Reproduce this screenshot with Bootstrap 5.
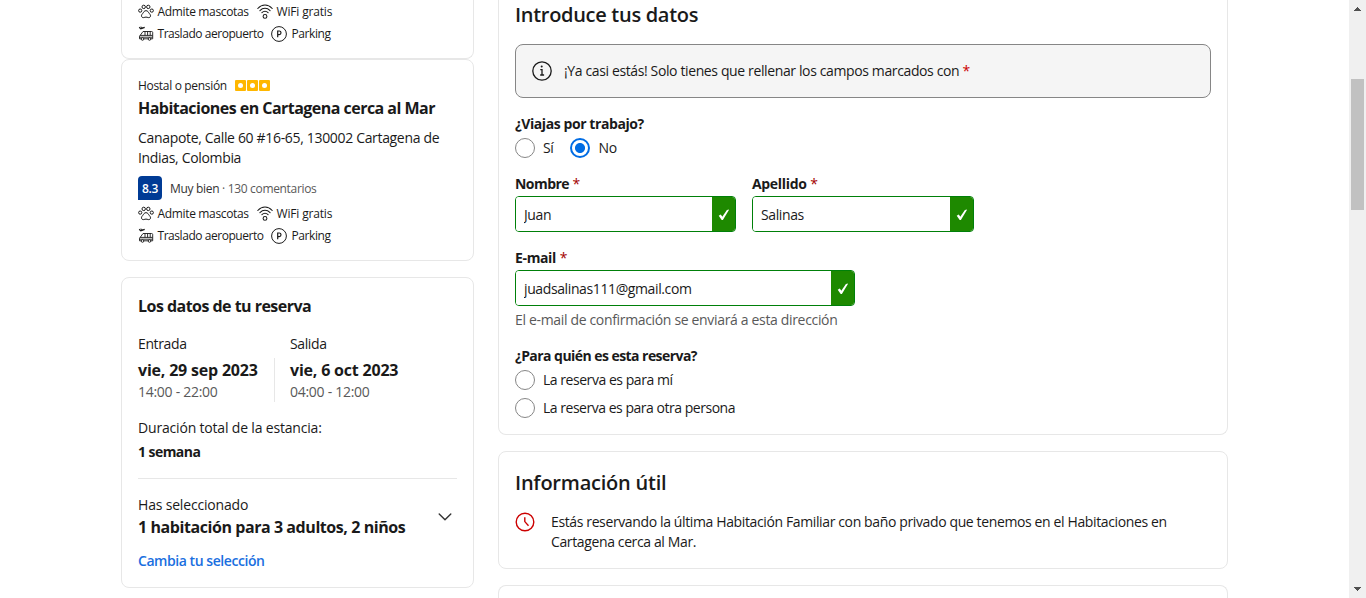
<!DOCTYPE html>
<html lang="es">
<head>
<meta charset="utf-8">
<title>Introduce tus datos</title>
<meta name="viewport" content="width=device-width, initial-scale=1">
<link href="https://cdn.jsdelivr.net/npm/bootstrap@5.3.0/dist/css/bootstrap.min.css" rel="stylesheet">
<style>
html,body{height:100%;overflow:hidden}
body{font-family:"Open Sans","Noto Sans",sans-serif;font-size:14px;line-height:20px;letter-spacing:-.375px;color:#1a1a1a;background:#fff}
.page{width:1107px;margin-left:121px;gap:24px}
.side{width:353px}
.main{width:730px}
.panel{border:1px solid #e7e7e7;border-radius:8px;padding:0 16px;background:#fff}
.panel-cut{border-top:0;border-top-left-radius:0;border-top-right-radius:0}
.panel-open{height:13px;border-bottom:0;border-bottom-left-radius:0;border-bottom-right-radius:0}
.tiny{font-size:12px;letter-spacing:-.32px}
.muted{color:#595959}
h2{font-size:20px;line-height:28px;font-weight:600;letter-spacing:-.3px;margin:0}
h3{font-size:16px;line-height:24px;font-weight:700;letter-spacing:-.53px;margin:0}
.strong{font-weight:700;letter-spacing:-.55px}
.dates{letter-spacing:-.2px}
.hours{letter-spacing:-.28px}
.wide{letter-spacing:-.18px}
.fac{font-size:12px;line-height:22px;letter-spacing:-.45px;white-space:nowrap}
.fac svg{width:16px;height:16px;flex:none}
.fac span{margin-left:3.5px}
.fac .pets{letter-spacing:-.34px;width:92.5px}
.fac .bus{width:107.5px}
.fac .wifi{letter-spacing:-.16px}
.fac .park{letter-spacing:-.41px;margin-left:4.5px}
.sq{width:11px;height:11px;border-radius:1px;background:#ffb700;display:flex;align-items:center;justify-content:center}
.sq::after{content:"";width:5px;height:5px;border-radius:50%;background:#fff}
.score{width:24px;height:24px;background:#003b95;color:#fff;border-radius:4px 4px 4px 0;font-size:12px;font-weight:600;line-height:25px;text-align:center;letter-spacing:-.3px}
.rule{width:1px;height:44px;background:#e7e7e7;margin-top:24px}
.notice{height:54px;background:#f5f5f5;border:1px solid #868686;border-radius:8px;padding:0 16px;gap:12px}
.req{color:#c00;font-weight:400}
.strong .req{color:#a30000;margin-left:.5px}
.radio{width:20px;height:20px;margin:0;border:1px solid #868686;float:none}
.radio:checked{background:#fff radial-gradient(circle,#006ce4 4.6px,#fff 5.4px);border:2px solid #006ce4}
.choice{gap:8px}
.field{height:36px;border:1px solid #008009;border-radius:4px;overflow:hidden}
.field input{border:0;padding:1px 8px;font-size:14px;letter-spacing:-.385px;color:#1a1a1a;height:34px;border-radius:0;box-shadow:none;min-width:0}
.tick{width:24px;flex:none;margin:-1px -1px -1px 0;padding-top:2px;background:#1e8900}
.link{color:#1a6fe0;font-weight:600;letter-spacing:-.445px;text-decoration:none}
.hairline{height:1px;background:#e7e7e7}
.scroll{width:17px;background:#f0f0f0;top:0;right:0;height:598px}
.thumb{width:13px;height:131px;background:#c1c1c1;margin:0 2px}
</style>
</head>
<body>
<svg class="d-none" xmlns="http://www.w3.org/2000/svg">
  <symbol id="i-paw" viewBox="0 0 16 16" fill="none" stroke="#1a1a1a" stroke-width="1">
    <circle cx="2.2" cy="6.6" r="1.6"/><circle cx="5.7" cy="2.9" r="1.7"/><circle cx="10.3" cy="2.9" r="1.7"/><circle cx="13.8" cy="6.6" r="1.6"/>
    <path d="M8 6.7c1.8 0 2.2 1.3 3 2.4.7 1 1.5 1.4 1.5 2.7 0 1.5-1.2 2-2.2 1.8-.9-.2-1.5-.5-2.3-.5s-1.4.3-2.3.5c-1 .2-2.2-.3-2.2-1.8 0-1.3.8-1.7 1.5-2.7.8-1.1 1.2-2.4 3-2.4z"/>
  </symbol>
  <symbol id="i-wifi" viewBox="0 0 16 16" fill="none" stroke="#1a1a1a" stroke-width="1.05" stroke-linecap="round">
    <path d="M.8 4.5C5-.1 11-.1 15.2 4.5M2.9 6.6c3-3.1 7.2-3.1 10.2 0M4.9 8.7c1.9-1.9 4.3-1.9 6.2 0"/><circle cx="8" cy="12.4" r="1.9"/>
  </symbol>
  <symbol id="i-bus" viewBox="0 0 16 16" fill="none" stroke="#1a1a1a" stroke-width=".9">
    <path d="M1.2 1.2l1.6 1.5 3.9-1.3" stroke-width="1.3"/><path d="M2.7.8l2 1.2"/>
    <path d="M5 5.5h8.5q1.2 0 1.2 1v6.3H1.5v-2.500q0-.6.600-.8zM2 9.400h12.500M7 5.500v3.900M9.600 5.500v3.900M12.200 5.500v3.900M1.500 11.200h13"/>
    <circle cx="4.5" cy="13" r="1.3" fill="#fff"/><circle cx="11.5" cy="13" r="1.3" fill="#fff"/>
  </symbol>
  <symbol id="i-park" viewBox="0 0 16 16" fill="none" stroke="#1a1a1a">
    <circle cx="8" cy="8" r="7.4"/><path d="M6.7 11.3V5h1.5a1.7 1.7 0 0 1 0 3.6H6.7" stroke-width="1.2"/>
  </symbol>
  <symbol id="i-tick" viewBox="0 0 12 12"><path d="M.7 6.7l2.1-1.1 1.5 2.1L8.9 1l2.3-.4L4.9 11H3.7z" fill="#fff"/></symbol>
</svg>

<div class="page d-flex align-items-start">
  <aside class="side">
    <section class="panel panel-cut" style="height:59px;padding-top:1px">
      <div class="fac d-flex align-items-center"><svg><use href="#i-paw"/></svg><span class="pets">Admite mascotas</span><svg style="margin-left:7px"><use href="#i-wifi"/></svg><span class="wifi">WiFi gratis</span></div>
      <div class="fac d-flex align-items-center"><svg><use href="#i-bus"/></svg><span class="bus">Traslado aeropuerto</span><svg style="margin-left:6px"><use href="#i-park"/></svg><span class="park">Parking</span></div>
    </section>
    <section class="panel" style="height:202px">
      <div class="d-flex align-items-center tiny" style="margin-top:16px">Hostal o pensión<span class="d-flex ms-2" style="gap:1.2px;margin-top:-2px"><i class="sq"></i><i class="sq"></i><i class="sq"></i></span></div>
      <h3>Habitaciones en Cartagena cerca al Mar</h3>
      <div class="mt-2 text-nowrap" style="letter-spacing:-.33px">Canapote, Calle 60 #16-65, 130002 Cartagena de<br>Indias, Colombia</div>
      <div class="d-flex align-items-center gap-2 mt-2"><span class="score">8.3</span><span class="tiny muted" style="padding-top:2px"><span style="color:#333">Muy bien</span> · 130 comentarios</span></div>
      <div class="fac d-flex align-items-center" style="margin-top:3px"><svg><use href="#i-paw"/></svg><span class="pets">Admite mascotas</span><svg style="margin-left:7px"><use href="#i-wifi"/></svg><span class="wifi">WiFi gratis</span></div>
      <div class="fac d-flex align-items-center"><svg><use href="#i-bus"/></svg><span class="bus">Traslado aeropuerto</span><svg style="margin-left:6px"><use href="#i-park"/></svg><span class="park">Parking</span></div>
    </section>
    <section class="panel mt-3" style="height:311px">
      <h3 style="padding-top:16px">Los datos de tu reserva</h3>
      <div class="d-flex mt-3">
        <div style="width:136px">Entrada<h3 class="dates mt-1">vie, 29 sep 2023</h3><div class="hours muted">14:00 - 22:00</div></div>
        <div class="rule"></div>
        <div style="margin-left:15px">Salida<h3 class="dates mt-1">vie, 6 oct 2023</h3><div class="hours muted">04:00 - 12:00</div></div>
      </div>
      <div class="wide" style="margin-top:16px">Duración total de la estancia:</div>
      <div class="strong mt-1">1 semana</div>
      <div class="hairline" style="margin:16px 0"></div>
      <div class="d-flex justify-content-between align-items-center">
        <div><div class="wide">Has seleccionado</div><h3 style="letter-spacing:-.43px">1 habitación para 3 adultos, 2 niños</h3></div>
        <svg width="14" height="8" viewBox="0 0 14 8" style="margin-right:5px" fill="none" stroke="#333" stroke-width="1.4" stroke-linecap="round" stroke-linejoin="round"><path d="M1.2 1L7 6.8 12.8 1"/></svg>
      </div>
      <a class="link d-inline-block" style="margin-top:12px">Cambia tu selección</a>
    </section>
  </aside>

  <main class="main">
    <section class="panel panel-cut" style="height:435px">
      <h2 style="padding-top:1px">Introduce tus datos</h2>
      <div class="notice d-flex align-items-center" style="margin-top:15px">
        <svg width="20" height="20" viewBox="0 0 20 20" fill="none" stroke="#1a1a1a" stroke-width="1.3"><circle cx="10" cy="10" r="9.2"/><path d="M8.3 8.6H10v5M8.2 14h3.9"/><circle cx="9.7" cy="5.6" r="1" fill="#1a1a1a" stroke="none"/></svg>
        <span>¡Ya casi estás! Solo tienes que rellenar los campos marcados con <span class="req">*</span></span>
      </div>
      <div class="strong mt-3" style="letter-spacing:-.42px">¿Viajas por trabajo?</div>
      <div class="d-flex mt-1" style="gap:17px">
        <label class="choice d-flex"><input class="form-check-input radio" type="radio" name="work"><span>Sí</span></label>
        <label class="choice d-flex"><input class="form-check-input radio" type="radio" name="work" checked><span>No</span></label>
      </div>
      <div class="d-flex mt-3" style="gap:16px">
        <div style="width:221px"><label class="strong d-block">Nombre <span class="req">*</span></label>
          <div class="field d-flex" style="margin-top:2px"><input class="form-control" value="Juan"><span class="tick d-flex align-items-center justify-content-center"><svg width="12" height="12"><use href="#i-tick"/></svg></span></div></div>
        <div style="width:222px"><label class="strong d-block" style="letter-spacing:-.33px">Apellido <span class="req">*</span></label>
          <div class="field d-flex" style="margin-top:2px"><input class="form-control" value="Salinas"><span class="tick d-flex align-items-center justify-content-center"><svg width="12" height="12"><use href="#i-tick"/></svg></span></div></div>
      </div>
      <div class="mt-3" style="width:340px"><label class="strong d-block" style="letter-spacing:-.36px">E-mail <span class="req">*</span></label>
        <div class="field d-flex" style="margin-top:2px"><input class="form-control" value="juadsalinas111@gmail.com"><span class="tick d-flex align-items-center justify-content-center"><svg width="12" height="12"><use href="#i-tick"/></svg></span></div>
        <div class="muted mt-1" style="letter-spacing:-.335px">El e-mail de confirmación se enviará a esta dirección</div></div>
      <div class="strong mt-3">¿Para quién es esta reserva?</div>
      <label class="choice d-flex mt-1"><input class="form-check-input radio" type="radio" name="who"><span style="letter-spacing:-.46px">La reserva es para mí</span></label>
      <label class="choice d-flex mt-2"><input class="form-check-input radio" type="radio" name="who"><span style="letter-spacing:-.477px">La reserva es para otra persona</span></label>
    </section>
    <section class="panel mt-3" style="height:118px">
      <h2 style="padding-top:17px;letter-spacing:-.22px">Información útil</h2>
      <div class="d-flex" style="gap:16px;margin-top:15px">
        <svg class="flex-shrink-0" width="20" height="20" viewBox="0 0 20 20" fill="none" stroke="#c00" stroke-width="1.4"><circle cx="10" cy="10" r="8.8"/><path d="M9.8 5.3v4.3l3.7 4.2"/></svg>
        <div class="text-nowrap">Estás reservando la última Habitación Familiar con baño privado que tenemos en el Habitaciones en<br>Cartagena cerca al Mar.</div>
      </div>
    </section>
    <section class="panel panel-open mt-3"></section>
  </main>
</div>

<div class="scroll position-absolute d-flex flex-column">
  <svg width="17" height="17" viewBox="0 0 17 17" shape-rendering="crispEdges"><path d="M5 11h7L8.5 7z" fill="#505050"/></svg>
  <div class="thumb" style="margin-top:62px"></div>
  <svg class="mt-auto" width="17" height="17" viewBox="0 0 17 17" shape-rendering="crispEdges"><path d="M5 6h7L8.5 10z" fill="#505050"/></svg>
</div>
<script src="https://cdn.jsdelivr.net/npm/bootstrap@5.3.0/dist/js/bootstrap.bundle.min.js"></script>
</body>
</html>
